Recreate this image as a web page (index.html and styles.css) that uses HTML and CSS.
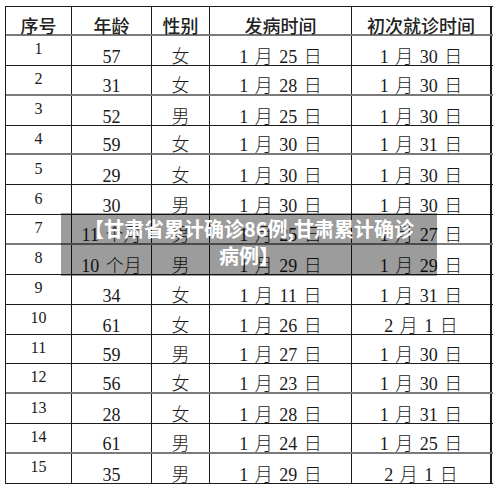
FILE: index.html
```html
<!DOCTYPE html>
<html lang="zh-CN">
<head>
<meta charset="utf-8">
<title>甘肃病例</title>
<link rel="stylesheet" href="styles.css">
</head>
<body>
<div class="page">
  <div class="sheet">
    <div class="row head thick">
      <div class="c">序号</div><div class="c">年龄</div><div class="c">性别</div><div class="c">发病时间</div><div class="c">初次就诊时间</div>
    </div>
    <div class="row"><div class="c no">1</div><div class="c v">57</div><div class="c v">女</div><div class="c v">1 月 25 日</div><div class="c v">1 月 30 日</div></div>
    <div class="row thick"><div class="c no">2</div><div class="c v">31</div><div class="c v">女</div><div class="c v">1 月 28 日</div><div class="c v">1 月 30 日</div></div>
    <div class="row"><div class="c no">3</div><div class="c v">52</div><div class="c v">男</div><div class="c v">1 月 25 日</div><div class="c v">1 月 30 日</div></div>
    <div class="row thick"><div class="c no">4</div><div class="c v">59</div><div class="c v">女</div><div class="c v">1 月 30 日</div><div class="c v">1 月 31 日</div></div>
    <div class="row"><div class="c no">5</div><div class="c v">29</div><div class="c v">女</div><div class="c v">1 月 30 日</div><div class="c v">1 月 30 日</div></div>
    <div class="row"><div class="c no">6</div><div class="c v">30</div><div class="c v">男</div><div class="c v">1 月 30 日</div><div class="c v">1 月 30 日</div></div>
    <div class="row thick"><div class="c no">7</div><div class="c v">11 个月</div><div class="c v">男</div><div class="c v">1 月 25 日</div><div class="c v">1 月 27 日</div></div>
    <div class="row"><div class="c no">8</div><div class="c v">10 个月</div><div class="c v">男</div><div class="c v">1 月 29 日</div><div class="c v">1 月 29 日</div></div>
    <div class="row"><div class="c no">9</div><div class="c v">34</div><div class="c v">女</div><div class="c v">1 月 11 日</div><div class="c v">1 月 31 日</div></div>
    <div class="row"><div class="c no">10</div><div class="c v">61</div><div class="c v">女</div><div class="c v">1 月 26 日</div><div class="c v">2 月 1 日</div></div>
    <div class="row"><div class="c no">11</div><div class="c v">59</div><div class="c v">男</div><div class="c v">1 月 27 日</div><div class="c v">1 月 30 日</div></div>
    <div class="row thick"><div class="c no">12</div><div class="c v">56</div><div class="c v">女</div><div class="c v">1 月 23 日</div><div class="c v">1 月 30 日</div></div>
    <div class="row"><div class="c no">13</div><div class="c v">28</div><div class="c v">女</div><div class="c v">1 月 28 日</div><div class="c v">1 月 31 日</div></div>
    <div class="row thick"><div class="c no">14</div><div class="c v">61</div><div class="c v">男</div><div class="c v">1 月 24 日</div><div class="c v">1 月 25 日</div></div>
    <div class="row"><div class="c no">15</div><div class="c v">35</div><div class="c v">男</div><div class="c v">1 月 29 日</div><div class="c v">2 月 1 日</div></div>
  </div>
  <div class="banner">【甘肃省累计确诊86例,甘肃累计确诊病例】</div>
</div>
</body>
</html>
```
FILE: styles.css
```css
html, body {
  margin: 0;
  padding: 0;
  background: #ffffff;
}

.page {
  position: relative;
  width: 500px;
  height: 489px;
  box-sizing: border-box;
  padding: 6px 0 0 5px;
}

.sheet {
  width: 487px;
  border-top: 1px solid #1c1c1c;
  border-left: 1px solid #1c1c1c;
}

.row {
  display: grid;
  grid-template-columns: 66px 80px 58px 142px 140px;
  height: 29.87px;
  box-sizing: border-box;
  border-bottom: 1px solid #1c1c1c;
}

.row.thick {
  border-bottom: 2px solid #7a7a7a;
}

.row.head {
  height: 29px;
}

.c {
  box-sizing: border-box;
  border-right: 1px solid #1c1c1c;
  display: flex;
  justify-content: center;
  align-items: flex-end;
  font-family: "Liberation Serif", "Noto Sans CJK SC", serif;
  font-weight: 300;
  font-size: 18px;
  line-height: 16px;
  word-spacing: 2px;
  color: #1a1a1a;
  white-space: pre;
}

.c:last-child {
  border-right: 2px solid #1c1c1c;
}

.head .c {
  font-family: "Noto Sans CJK SC", sans-serif;
  font-weight: 500;
  font-size: 18px;
  line-height: 18px;
  word-spacing: 0;
  color: #222222;
}

.c.no {
  align-items: center;
  font-size: 16px;
  line-height: 16px;
  padding-bottom: 2px;
}

.banner {
  position: absolute;
  left: 61px;
  top: 213px;
  width: 376px;
  height: 63px;
  box-sizing: border-box;
  padding: 2px 14px 0;
  background: rgba(0, 0, 0, 0.39);
  color: #ffffff;
  font-family: "Noto Sans CJK SC", sans-serif;
  font-weight: 700;
  font-size: 20px;
  line-height: 27px;
  text-align: center;
}
```
